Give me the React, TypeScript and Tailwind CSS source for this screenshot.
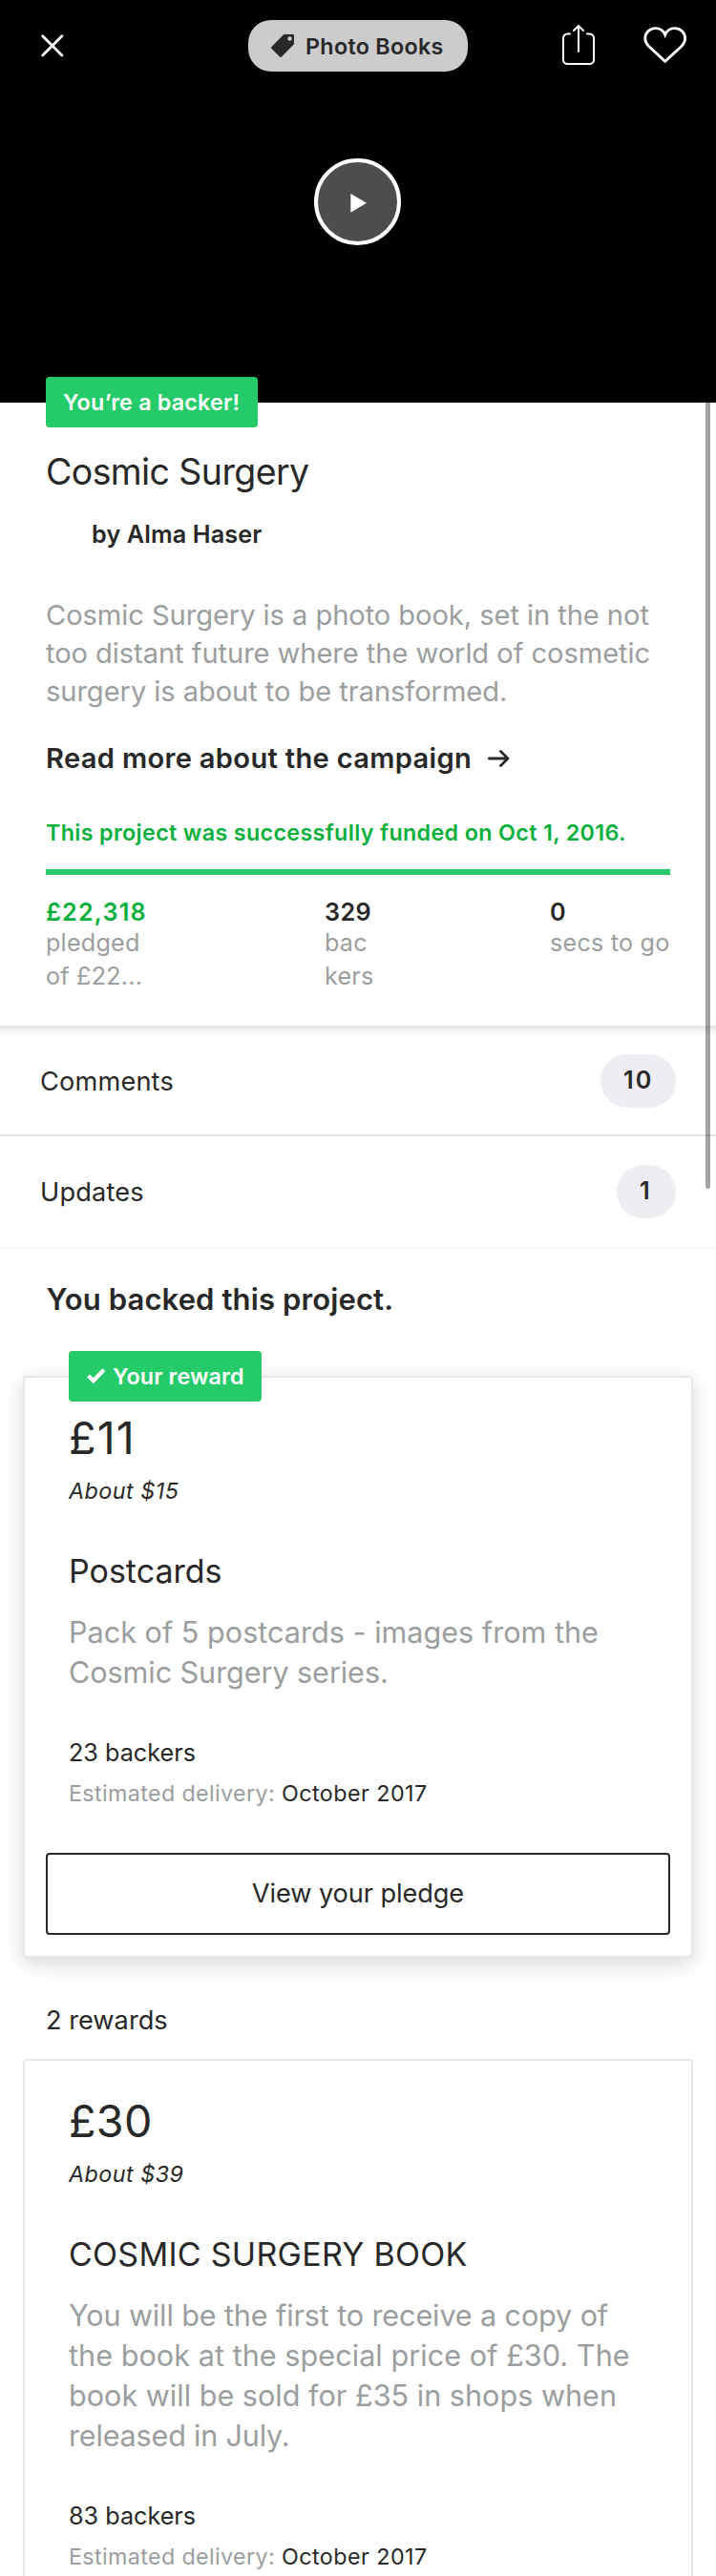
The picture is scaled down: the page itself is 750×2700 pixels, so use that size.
import React from "react";

function CloseIcon() {
  return (
    <svg width="24" height="24" viewBox="0 0 24 24" fill="none" stroke="#fff" strokeWidth="2.8" strokeLinecap="round">
      <path d="M1.7 1.7 21.9 21.9M21.9 1.7 1.7 21.9" />
    </svg>
  );
}

function TagIcon() {
  return (
    <svg width="24" height="24" viewBox="0 0 24 24">
      <path
        fill="#282828"
        fillRule="evenodd"
        d="M13.8 0H23a1 1 0 0 1 1 1v8.6a2 2 0 0 1-.5 1.2L11 23.5a1.4 1.4 0 0 1-2 0L.5 15a1.4 1.4 0 0 1 0-2L12.8.4a1.6 1.6 0 0 1 1-.4ZM19.5 2.3a2.25 2.25 0 1 0 0 4.5a2.25 2.25 0 0 0 0-4.5Z"
      />
    </svg>
  );
}

function ShareIcon() {
  return (
    <svg width="36" height="44" viewBox="0 0 36 44" fill="none" stroke="#fff" strokeWidth="2" strokeLinecap="round" strokeLinejoin="round" className="mt-1">
      <path d="M9 10.5H6.5a4.5 4.5 0 0 0-4.5 4.5V37.5a4.5 4.5 0 0 0 4.5 4.5H29.5a4.5 4.5 0 0 0 4.5-4.5V15a4.5 4.5 0 0 0-4.5-4.5H27" />
      <path d="M18 29V2M13 7l5-5 5 5" />
    </svg>
  );
}

function HeartIcon() {
  return (
    <svg width="46" height="39" viewBox="0 0 46 39" fill="none" stroke="#fff" strokeWidth="2.8" className="mt-[7px]">
      <path d="M22.7 8.5C21 4.3 16.8 1.7 12.4 1.7 6.5 1.7 1.8 6.4 1.8 12.3c0 3.2 1.4 5.7 3.5 7.9L22.7 36.3 40.1 20.2c2.1-2.2 3.5-4.7 3.5-7.9C43.6 6.4 38.9 1.7 33 1.7 28.6 1.7 24.4 4.3 22.7 8.5Z" />
    </svg>
  );
}

function CheckIcon() {
  return (
    <svg width="20" height="17" viewBox="0 0 20 17" fill="none" stroke="#fff" strokeWidth="4.2" className="mr-[7px] -mt-0.5 shrink-0">
      <path d="M1.5 8 6.8 13.2 17.8 1.8" />
    </svg>
  );
}

function ArrowIcon() {
  return (
    <svg width="23" height="18" viewBox="0 0 23 18" fill="none" stroke="#282828" strokeWidth="2.8" strokeLinecap="round" strokeLinejoin="round" className="ml-[17px]">
      <path d="M1.4 9H20.5M13.5 1.6 21 9l-7.5 7.4" />
    </svg>
  );
}

function Hero() {
  return (
    <header className="h-[422px] bg-black pt-[21px]">
      <div className="grid h-[54px] grid-cols-[260px_230px_260px]">
        <div className="pl-[42.5px] pt-[15px]">
          <CloseIcon />
        </div>
        <div className="flex items-center rounded-[24px] bg-[#cccccc] pl-6">
          <TagIcon />
          <span className="ml-3 whitespace-nowrap pt-px text-[23.3px] font-semibold leading-8 tracking-[0.3px]">Photo Books</span>
        </div>
        <div className="flex items-start gap-[50px] pl-[98px]">
          <ShareIcon />
          <HeartIcon />
        </div>
      </div>
      <div className="ml-[329px] mt-[91px] h-[91px] w-[91px] rounded-full border-4 border-white bg-[#4d4d4d] pl-[34px] pt-[33px]">
        <svg width="18" height="20" viewBox="0 0 18 20">
          <path fill="#fff" d="M.3 0 17 9.8.3 19.8Z" />
        </svg>
      </div>
    </header>
  );
}

function CountRow({ label, count }: { label: string; count: React.ReactNode }) {
  return (
    <div className="flex h-full items-center justify-between px-[42px]">
      <span className="pt-0.5 text-[27.2px] leading-9 tracking-[0.15px]">{label}</span>
      {count}
    </div>
  );
}

type RewardProps = {
  amount: React.ReactNode;
  about: string;
  title: React.ReactNode;
  description: React.ReactNode;
  backers: string;
};

function RewardBody({ amount, about, title, description, backers }: RewardProps) {
  return (
    <div className="whitespace-nowrap pl-[46px]">
      <div className="text-[46.6px] leading-[56px]">{amount}</div>
      <div className="mt-[12px] text-[23.3px] italic leading-8 tracking-[0.5px]">{about}</div>
      <div className="mt-[45.5px] text-[34px] leading-[44px]">{title}</div>
      <div className="mt-[21.5px] text-[30.6px] leading-[42px] text-[#9b9e9e]">{description}</div>
      <div className="mt-[46.5px] text-[25.2px] leading-8">{backers}</div>
      <div className="mt-[11px] text-[23.3px] leading-8 tracking-[0.45px]">
        <span className="tracking-[0.36px] text-[#9b9e9e]">Estimated delivery:</span> October 2017
      </div>
    </div>
  );
}

export default function App() {
  return (
    <div className="relative h-[2700px] w-[750px] overflow-hidden bg-white font-['Inter',sans-serif] text-[#282828]">
      <Hero />

      <section className="px-12 pb-[35px]">
        <div className="relative -mt-[27px] flex h-[53px] w-[222px] items-center whitespace-nowrap rounded bg-[#25cb68] pl-[18px] pt-px text-[23.3px] font-semibold tracking-[0.2px] text-white">
          You’re a backer!
        </div>
        <h1 className="mt-[22.5px] text-[37.5px] leading-[48px] tracking-[-0.6px]">Cosmic Surgery</h1>
        <div className="ml-12 mt-[25.5px] text-[25.2px] font-semibold leading-8 tracking-[0.13px]">by Alma Haser</div>
        <p className="mt-[48.5px] whitespace-nowrap text-[29.1px] leading-10 tracking-[-0.06px] text-[#9b9e9e]">
          Cosmic Surgery is a photo book, set in the not
          <br />
          too distant future where the world of cosmetic
          <br />
          surgery is about to be transformed.
        </p>
        <div className="mt-[30px] flex items-center whitespace-nowrap text-[29.1px] font-semibold leading-10 tracking-[0.32px]">
          Read more about the campaign
          <ArrowIcon />
        </div>
        <div className="mt-[42.5px] whitespace-nowrap text-[23.3px] font-semibold leading-8 tracking-[0.34px] text-[#0aaf3c]">
          This project was successfully funded on Oct 1, 2016.
        </div>
        <div className="mt-[22px] h-[6px] bg-[#25cb68]" />
        <div className="mt-6 grid grid-cols-[292px_236px_1fr] whitespace-nowrap text-[25.2px] leading-[34.5px] tracking-[0.2px]">
          <div>
            <div className="-mb-px font-semibold leading-[31px] tracking-[1.2px] text-[#0aaf3c]">£22,318</div>
            <div className="text-[#9b9e9e]">pledged<br />of £22...</div>
          </div>
          <div>
            <div className="-mb-px font-semibold leading-[31px] tracking-[0.4px]">329</div>
            <div className="text-[#9b9e9e]">bac<br />kers</div>
          </div>
          <div>
            <div className="-mb-px font-semibold leading-[31px]">0</div>
            <div className="text-[#9b9e9e]">secs to go</div>
          </div>
        </div>
      </section>

      <div className="h-[114px] border-t-2 border-[#e5e5e5] bg-[linear-gradient(to_bottom,#e8e8e8,#f7f7f7_5px,#ffffff_9px)]">
        <CountRow
          label="Comments"
          count={<span className="flex h-14 w-[79px] items-center rounded-[28px] bg-[#eeeef2] pl-[24px] text-[25.2px] font-semibold tracking-[2px]">10</span>}
        />
      </div>
      <div className="h-[120px] border-y-2 border-b-[#f7f7f7] border-t-[#e5e5e5]">
        <CountRow
          label="Updates"
          count={<span className="flex h-14 w-[62px] items-center rounded-[28px] bg-[#eeeef2] pl-[24px] text-[25.2px] font-semibold">1</span>}
        />
      </div>

      <h2 className="ml-[48.5px] mt-[32.5px] text-[31px] font-semibold leading-10 tracking-[0.12px]">You backed this project.</h2>

      <section className="mx-6 mt-[60.5px] rounded border-2 border-[#e8e8e8] pb-[22px] shadow-[0_6px_22px_rgba(0,0,0,0.16)]">
        <div className="relative -mt-7 mb-[10px] ml-[46px] flex h-[53px] w-[202px] items-center whitespace-nowrap rounded bg-[#25cb68] pl-[19px] pt-px text-[23.3px] font-semibold tracking-[0.13px] text-white">
          <CheckIcon />
          Your reward
        </div>
        <RewardBody
          amount={<span className="tracking-[1.2px]">£11</span>}
          about="About $15"
          title="Postcards"
          description={
            <>
              Pack of 5 postcards - images from the
              <br />
              <span className="tracking-[-0.08px]">Cosmic Surgery series.</span>
            </>
          }
          backers="23 backers"
        />
        <button className="mx-[22px] mt-[46.5px] block h-[86px] w-[654px] rounded border-2 border-[#282828] pt-px text-[27.2px] tracking-[-0.1px]">
          View your pledge
        </button>
      </section>

      <div className="ml-12 mt-[47.5px] text-[27.2px] leading-9">2 rewards</div>

      <section className="mx-6 mt-[22.5px] rounded border-2 border-[#e8e8e8] pb-16 pt-[35px]">
        <RewardBody
          amount={<span className="tracking-[0.38px]">£30</span>}
          about="About $39"
          title={<span className="tracking-[0.27px]">COSMIC SURGERY BOOK</span>}
          description={
            <>
              <span className="tracking-[-0.13px]">You will be the first to receive a copy of</span>
              <br />
              <span className="tracking-[0.04px]">the book at the special price of £30. The</span>
              <br />
              book will be sold for £35 in shops when
              <br />
              <span className="tracking-[-0.2px]">released in July.</span>
            </>
          }
          backers="83 backers"
        />
      </section>

      <div className="absolute left-[739px] top-[422px] h-[824px] w-[5px] rounded-b-full bg-black/36" />
    </div>
  );
}
